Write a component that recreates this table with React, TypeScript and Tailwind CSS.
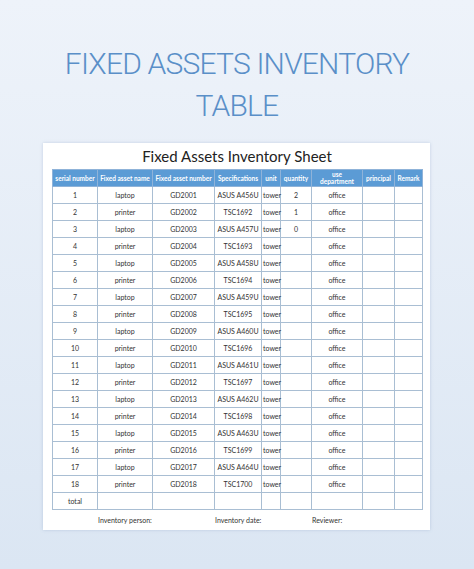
import React from 'react';

// column widths in px, sums to the 370px table
const COLS = [45, 55, 62, 47, 19, 31, 51, 32, 28];

const HEADERS = [
  'serial number',
  'Fixed asset name',
  'Fixed asset number',
  'Specifications',
  'unit',
  'quantity',
  'use department',
  'principal',
  'Remark',
];

const QTY = ['2', '1', '0'];

const ROWS = Array.from({ length: 18 }, (_, i) => {
  const n = i + 1;
  const odd = n % 2 === 1;
  return {
    serial: String(n),
    name: odd ? 'laptop' : 'printer',
    number: `GD20${String(n).padStart(2, '0')}`,
    spec: odd ? `ASUS A${456 + (n - 1) / 2}U` : `TSC${1692 + (n - 2) / 2}`,
    unit: 'tower',
    qty: QTY[i] ?? '',
    dept: 'office',
  };
});

const cell = 'border border-[#a9bed3] p-0';

export default function App() {
  return (
    <div
      className="w-[474px] h-[569px] overflow-hidden bg-gradient-to-b from-[#eef3fa] to-[#dbe6f3]"
      style={{ fontFamily: 'Lato, "Noto Sans", sans-serif' }}
    >
      {/* Big title */}
      <div
        className="pt-[43px] text-center text-[30px] leading-[42px] font-light tracking-[-0.8px] text-[#5a8fc8]"
        style={{ fontFamily: 'Roboto, "Noto Sans", sans-serif' }}
      >
        <div>FIXED ASSETS INVENTORY</div>
        <div>TABLE</div>
      </div>

      {/* Sheet card */}
      <div className="mt-[16px] ml-[43px] w-[387px] bg-white shadow-[0_0_3px_rgba(120,150,190,0.35)] pl-[9px] pr-[8px]">
        <div className="h-[26px] flex items-center justify-center text-[15px] text-[#222]">
          Fixed Assets Inventory Sheet
        </div>

        <table className="w-[370px] table-fixed border-collapse text-[7px] text-[#333]">
          <colgroup>
            {COLS.map((w, i) => (
              <col key={i} style={{ width: w }} />
            ))}
          </colgroup>
          <thead>
            <tr className="h-[17px] bg-[#5b9bd5] text-white">
              {HEADERS.map((h, i) => (
                <th
                  key={h}
                  className={`border border-[#8fb3d9] p-0 text-[6.5px] font-bold leading-[7px] ${
                    i === 6 ? 'whitespace-normal px-[8px]' : 'whitespace-nowrap'
                  }`}
                >
                  {h}
                </th>
              ))}
            </tr>
          </thead>
          <tbody>
            {ROWS.map((r) => (
              <tr key={r.serial} className="h-[17px] text-center">
                <td className={cell}>{r.serial}</td>
                <td className={cell}>{r.name}</td>
                <td className={cell}>{r.number}</td>
                <td className={`${cell} whitespace-nowrap`}>{r.spec}</td>
                <td className={`${cell} text-left pl-[1px]`}>{r.unit}</td>
                <td className={cell}>{r.qty}</td>
                <td className={cell}>{r.dept}</td>
                <td className={cell}></td>
                <td className={cell}></td>
              </tr>
            ))}
            <tr className="h-[17px] text-center">
              <td className={cell}>total</td>
              {COLS.slice(1).map((_, i) => (
                <td key={i} className={cell}></td>
              ))}
            </tr>
          </tbody>
        </table>

        {/* signature line */}
        <div className="h-[20px] flex items-center text-[7px] text-[#333]">
          <span className="w-[46px]"></span>
          <span className="w-[117px]">Inventory person:</span>
          <span className="w-[97px]">Inventory date:</span>
          <span>Reviewer:</span>
        </div>
      </div>
    </div>
  );
}
